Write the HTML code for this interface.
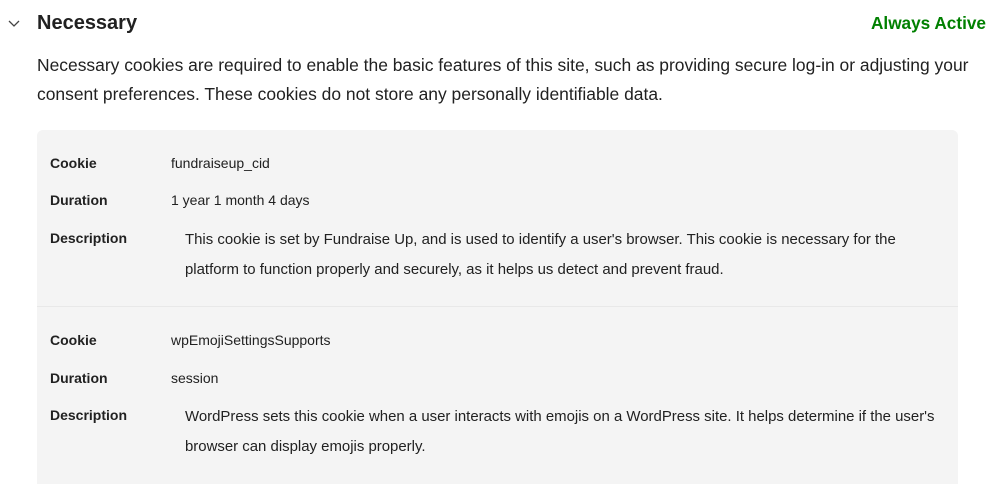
<!DOCTYPE html>
<html style="width:999px;height:484px;overflow:hidden"><head><meta charset="utf-8"><style>
body{margin:0;background:#fff;font-family:"Liberation Sans",sans-serif;color:#212121;width:999px;height:484px;overflow:hidden;position:relative}
.a{position:absolute;white-space:nowrap}
.t{font-size:20px;font-weight:bold;color:#212121}
.p{font-size:17.45px;color:#212121;line-height:29px}
.box{position:absolute;left:37px;top:130px;width:921px;height:354px;background:#f4f4f4;border-radius:6px 6px 0 0}
.k{font-size:14px;font-weight:bold;color:#212121}
.v{font-size:14px;color:#212121}
.d{font-size:14.95px;color:#212121}
</style></head><body>
<svg class="a" style="left:7px;top:18px" width="14" height="10" viewBox="0 0 14 10"><path d="M2 3 L7 8 L12 3" fill="none" stroke="#444" stroke-width="1.3"/></svg>
<div class="a t" style="left:37px;top:12px">Necessary</div>
<div class="a" style="left:871px;top:13px;font-size:17.2px;font-weight:bold;color:#008000">Always Active</div>
<div class="a p" style="left:37px;top:51px">Necessary cookies are required to enable the basic features of this site, such as providing secure log-in or adjusting your<br>consent preferences. These cookies do not store any personally identifiable data.</div>
<div class="box"></div>
<div class="a" style="left:37px;top:306px;width:921px;height:1px;background:#e8e8e8"></div>
<div class="a k" style="left:50px;top:155px">Cookie</div><div class="a v" style="left:171px;top:155px">fundraiseup_cid</div>
<div class="a k" style="left:50px;top:192px">Duration</div><div class="a v" style="left:171px;top:192px">1 year 1 month 4 days</div>
<div class="a k" style="left:50px;top:230px">Description</div>
<div class="a d" style="left:185px;top:225px;line-height:30px">This cookie is set by Fundraise Up, and is used to identify a user's browser. This cookie is necessary for the<br>platform to function properly and securely, as it helps us detect and prevent fraud.</div>
<div class="a k" style="left:50px;top:332px">Cookie</div><div class="a v" style="left:171px;top:332px">wpEmojiSettingsSupports</div>
<div class="a k" style="left:50px;top:370px">Duration</div><div class="a v" style="left:171px;top:370px">session</div>
<div class="a k" style="left:50px;top:407px">Description</div>
<div class="a d" style="left:185px;top:402px;line-height:30px">WordPress sets this cookie when a user interacts with emojis on a WordPress site. It helps determine if the user's<br>browser can display emojis properly.</div>
</body></html>
